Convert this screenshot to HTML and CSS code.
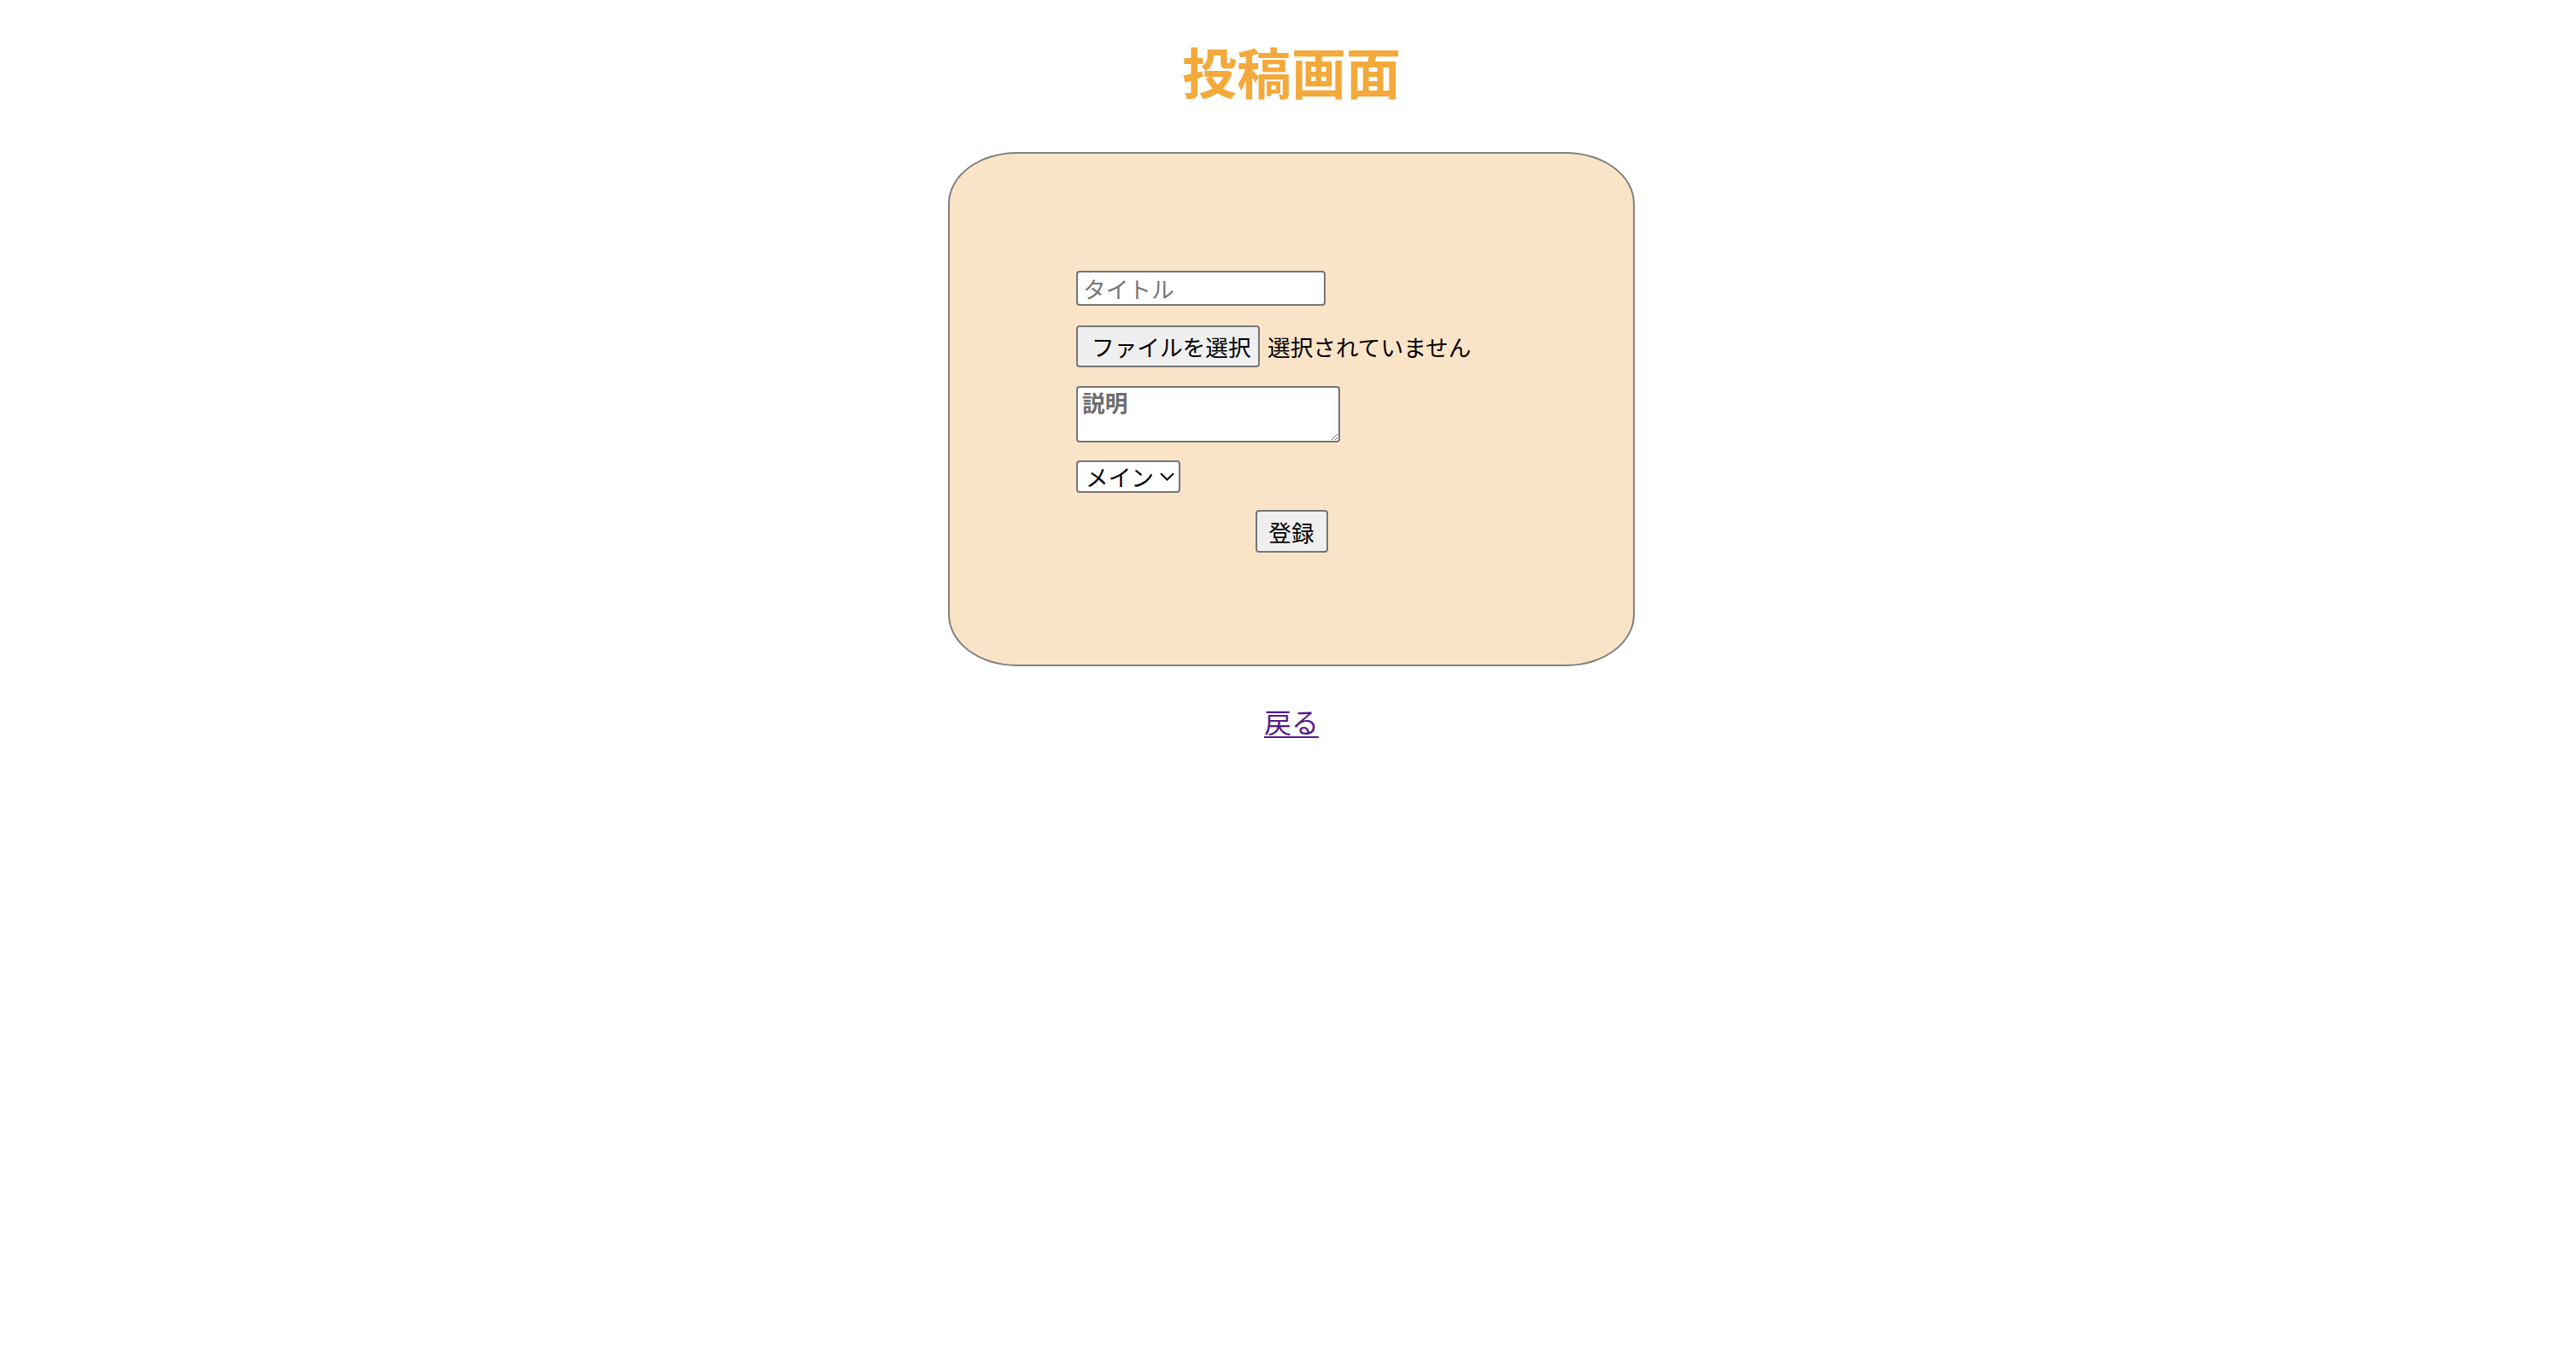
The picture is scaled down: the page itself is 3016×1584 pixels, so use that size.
FILE: index.html
```html
<!DOCTYPE html>
<html lang="ja">
<head>
<meta charset="utf-8">
<title>投稿画面</title>
<link rel="stylesheet" href="styles.css">
</head>
<body>
<div class="page">
  <h1 class="title">投稿画面</h1>
  <form class="post-box">
    <input class="field field-title" type="text" placeholder="タイトル">
    <div class="file-row">
      <label class="file-btn">ファイルを選択<input class="file-hidden" type="file"></label>
      <span class="file-status">選択されていません</span>
    </div>
    <textarea class="field field-desc" placeholder="説明"></textarea>
    <div class="select-wrap">
      <select class="field field-select">
        <option>メイン</option>
        <option>サブ</option>
      </select>
      <svg class="select-chevron" width="17" height="10" viewBox="0 0 17 10"><path d="M1 1.2 L8.5 8.6 L16 1.2" fill="none" stroke="#000" stroke-width="2"/></svg>
    </div>
    <button class="submit-btn" type="submit">登録</button>
  </form>
  <a class="back-link" href="#">戻る</a>
</div>
</body>
</html>
```

FILE: styles.css
```css
html, body {
  margin: 0;
  padding: 0;
  background: #ffffff;
}

body {
  font-family: "Noto Sans CJK JP", "Noto Sans", sans-serif;
  color: #000;
}

.page {
  display: flex;
  flex-direction: column;
  align-items: center;
  padding-left: 8px;
}

.title {
  margin: 42px 0 56px;
  font-size: 64px;
  line-height: 80px;
  font-weight: 700;
  color: #f3a93b;
}

.post-box {
  box-sizing: border-box;
  width: 804px;
  height: 602px;
  padding: 137px 148px 0;
  background: #fae4c7;
  border: 2px solid #808080;
  border-radius: 10%;
  display: flex;
  flex-direction: column;
  align-items: flex-start;
}

.field {
  box-sizing: border-box;
  font-family: "Noto Sans CJK JP", sans-serif;
  font-size: 26.67px;
  color: #000;
  background: #fff;
  border: 2px solid #767676;
  border-radius: 4px;
  margin: 0;
  outline: none;
}

.field::placeholder {
  color: #757575;
  opacity: 1;
}

.field-title {
  width: 292px;
  height: 41px;
  padding: 0 6px;
  line-height: 37px;
  margin-bottom: 23px;
}

.file-row {
  display: flex;
  align-items: center;
  height: 49px;
  margin-bottom: 22px;
}

.file-btn {
  box-sizing: border-box;
  display: flex;
  align-items: center;
  height: 49px;
  width: 215px;
  padding: 0 12px 0 16px;
  font-size: 26.67px;
  background: #efefef;
  border: 2px solid #767676;
  border-radius: 4px;
  white-space: nowrap;
}

.file-hidden {
  display: none;
}

.file-status {
  margin-left: 9px;
  font-size: 26.67px;
  white-space: nowrap;
}

.field-desc {
  width: 309px;
  height: 66px;
  padding: 2px 5px;
  line-height: 30px;
  font-weight: 700;
  resize: both;
  margin-bottom: 21px;
}

.field-desc::placeholder {
  color: #6d6d6d;
}

.select-wrap {
  position: relative;
  margin-bottom: 20px;
}

.field-select {
  appearance: none;
  -webkit-appearance: none;
  width: 122px;
  height: 38px;
  padding: 0 0 0 9px;
  line-height: 34px;
  display: block;
}

.select-chevron {
  position: absolute;
  left: 98px;
  top: 14px;
  pointer-events: none;
}

.submit-btn {
  align-self: center;
  box-sizing: border-box;
  width: 85px;
  height: 50px;
  padding: 0;
  font-family: "Noto Sans CJK JP", sans-serif;
  font-size: 26.67px;
  color: #000;
  background: #efefef;
  border: 2px solid #767676;
  border-radius: 4px;
}

.back-link {
  margin-top: 41px;
  font-size: 32px;
  line-height: 46px;
  color: #551a8b;
  text-decoration: underline;
  text-underline-offset: 4px;
  text-decoration-thickness: 2px;
}
```
